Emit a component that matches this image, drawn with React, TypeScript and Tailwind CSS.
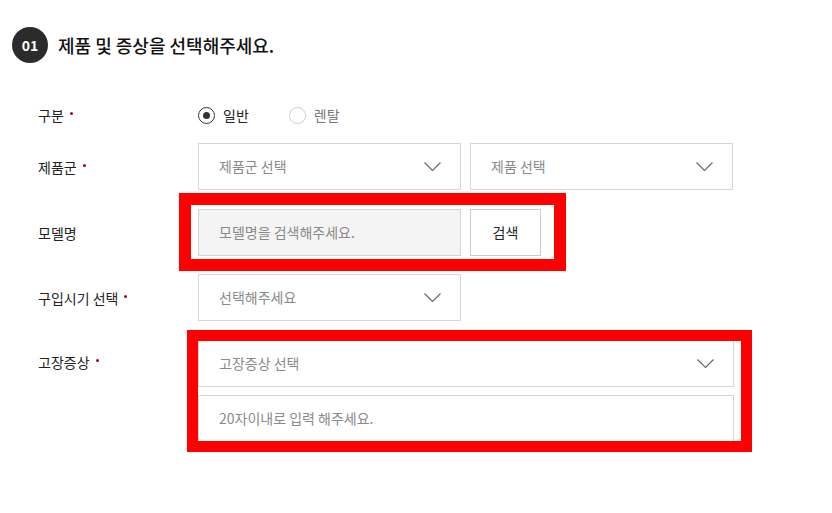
const font = { fontFamily: '"Noto Sans CJK KR", "Noto Sans", sans-serif' };

function Chevron() {
  return (
    <svg width="17" height="9" viewBox="0 0 17 9" fill="none">
      <path d="M0.5 0.5l8 8 8-8" stroke="#666" strokeWidth="1.1" />
    </svg>
  );
}

function Label({ text }: { text: string }) {
  return (
    <div className="w-[160px] flex-none text-[14px] text-[#222] leading-none">
      {text}
      <span className="relative -top-[6px] ml-[6px] inline-block h-[3px] w-[3px] rounded-full bg-[#a50034]" />
    </div>
  );
}

function Select({ text, wide }: { text: string; wide?: boolean }) {
  return (
    <div
      className={`flex h-[47px] items-center justify-between border border-[#d6d6d6] bg-white pl-[20px] pr-[19px] ${
        wide ? "w-[536px]" : "w-[263px]"
      }`}
    >
      <span className="text-[14px] text-[#8a8a8a]">{text}</span>
      <Chevron />
    </div>
  );
}

export default function App() {
  return (
    <div className="relative h-[513px] w-[832px] bg-white" style={font}>
      <div className="flex items-center gap-[10px] pl-[12px] pt-[27px]">
        <span className="flex h-[36px] w-[36px] items-center justify-center rounded-full bg-[#2b2b2b] text-[14px] font-bold text-white">
          01
        </span>
        <h2 className="text-[18px] font-medium text-[#111]">제품 및 증상을 선택해주세요.</h2>
      </div>

      <div className="relative mt-[37px] pl-[38px]">
        <div className="flex h-[30px] items-center">
          <Label text="구분" />
          <div className="flex items-center">
            <span className="flex h-[17px] w-[17px] items-center justify-center rounded-full border border-[#333]">
              <span className="h-[7px] w-[7px] rounded-full bg-[#333]" />
            </span>
            <span className="ml-[8px] text-[14px] text-[#222]">일반</span>
            <span className="ml-[40px] h-[17px] w-[17px] rounded-full border border-[#ccc]" />
            <span className="ml-[8px] text-[14px] text-[#777]">렌탈</span>
          </div>
        </div>

        <div className="mt-[13px] flex items-center">
          <Label text="제품군" />
          <div className="flex gap-[9px]">
            <Select text="제품군 선택" />
            <Select text="제품 선택" />
          </div>
        </div>

        <div className="mt-[19px] flex items-center">
          <div className="w-[160px] flex-none text-[14px] text-[#222] leading-none">모델명</div>
          <div className="flex gap-[9px]">
            <div className="flex h-[47px] w-[263px] items-center border border-[#d6d6d6] bg-[#f4f4f4] pl-[20px] text-[14px] text-[#8a8a8a]">
              모델명을 검색해주세요.
            </div>
            <button className="h-[47px] w-[71px] border border-[#ccc] bg-white text-[14px] text-[#222]">검색</button>
          </div>
        </div>

        <div className="mt-[18px] flex items-center">
          <Label text="구입시기 선택" />
          <Select text="선택해주세요" />
        </div>

        <div className="mt-[19px] flex items-start">
          <div className="pt-[15px]">
            <Label text="고장증상" />
          </div>
          <div className="flex flex-col gap-[8px]">
            <Select text="고장증상 선택" wide />
            <div className="flex h-[47px] w-[536px] items-center border border-[#d6d6d6] bg-white pl-[20px] text-[14px] text-[#8a8a8a]">
              20자이내로 입력 해주세요.
            </div>
          </div>
        </div>
      </div>

      <div className="pointer-events-none absolute left-[179px] top-[193px] h-[78px] w-[387px] border-[12px] border-[#ff0000]" />
      <div className="pointer-events-none absolute left-[187px] top-[330px] h-[122px] w-[565px] border-[11px] border-[#ff0000]" />
    </div>
  );
}
